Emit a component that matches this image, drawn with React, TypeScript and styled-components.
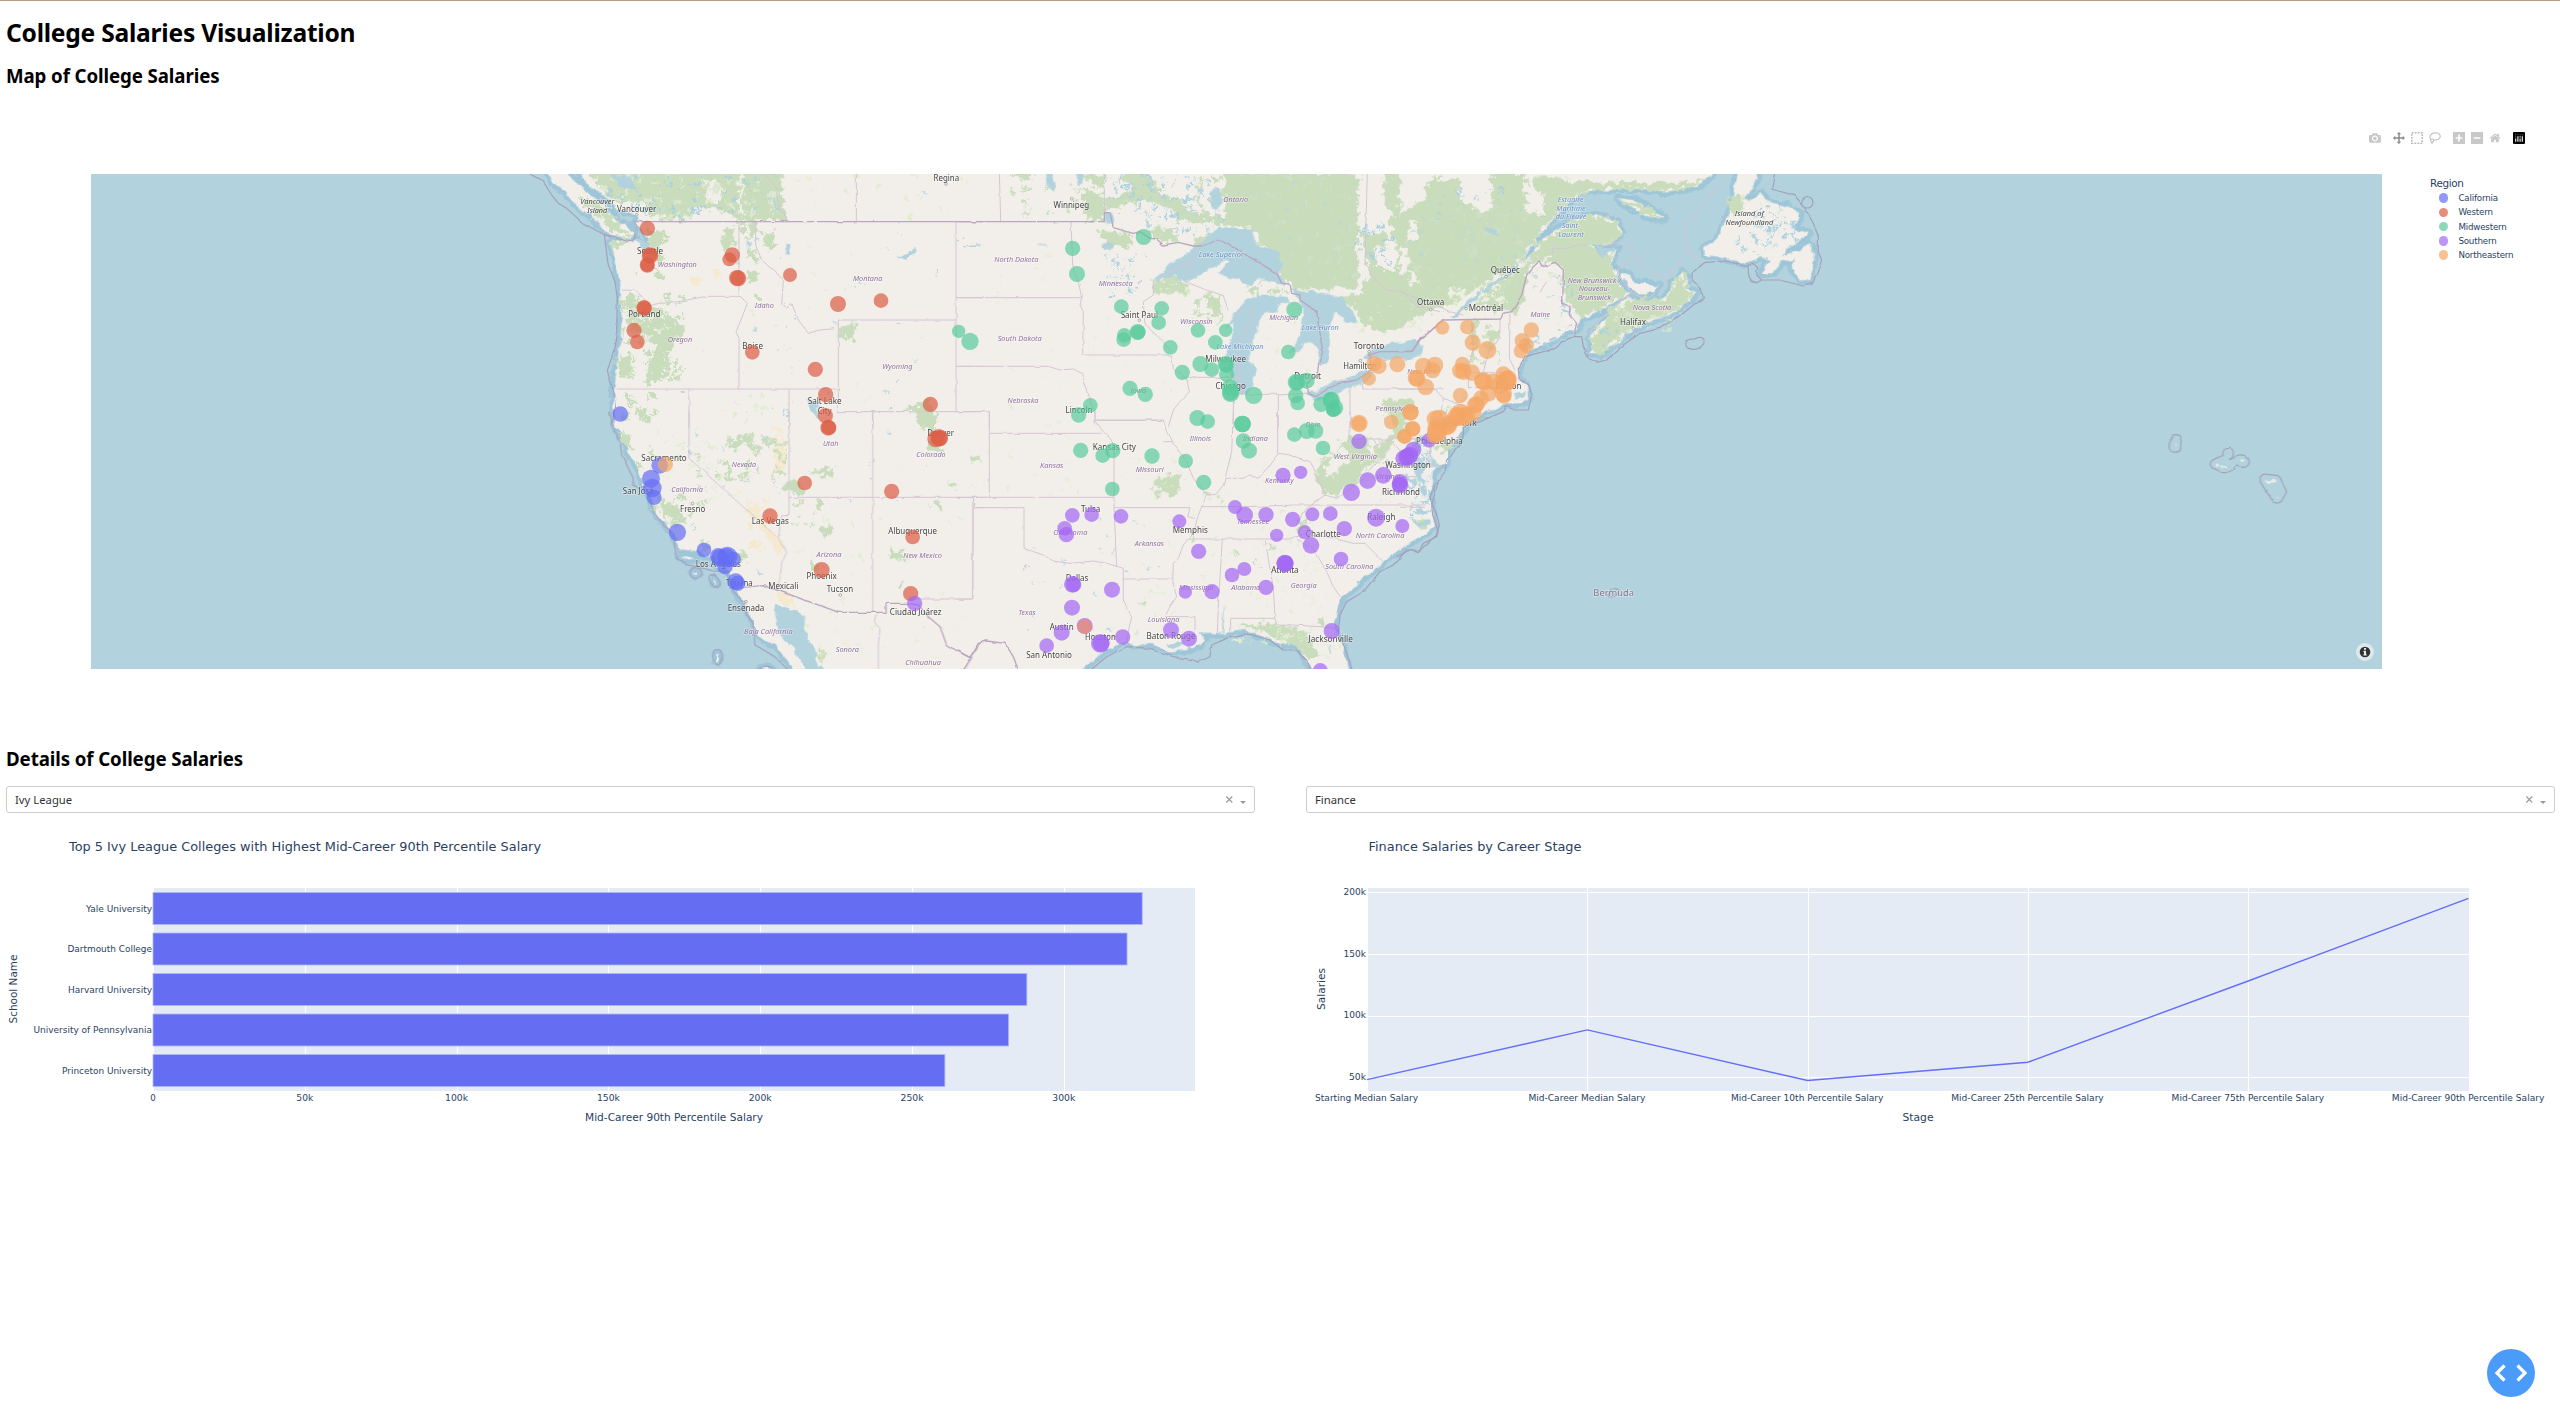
import React from "react";
import styled, { createGlobalStyle } from "styled-components";

const GlobalStyle = createGlobalStyle`
  * { box-sizing: border-box; }
  body { margin: 0; background: #fff; color: #000; font-family: "Noto Sans", "Open Sans", sans-serif; overflow: hidden; }
`;

const verdana = `"DejaVu Sans", Verdana, sans-serif`;

const Page = styled.main`
  display: flex;
  flex-direction: column;
  height: 1422px;
  border-top: 1px solid #b99f80;
  padding: 14px 5px 0 6px;
`;
const Title = styled.h1`
  margin: 0;
  height: 36px;
  font: 700 24.6px/36px "Noto Sans", sans-serif;
  letter-spacing: -0.24px;
`;
const Heading = styled.h2<{ $gap: number }>`
  margin: ${(p) => p.$gap}px 0 0;
  height: 30px;
  font: 700 18.7px/30px "Noto Sans", sans-serif;
  letter-spacing: -0.1px;
`;
const MapFigure = styled.section`
  display: flex;
  flex-direction: column;
  height: 636px;
  margin-top: 10px;
  padding: 31px 0 0 85px;
`;
const ModeBar = styled.div`
  display: flex;
  align-items: center;
  justify-content: flex-end;
  height: 12px;
  padding-right: 30px;
  margin-bottom: 30px;
`;
const ModeGroup = styled.div`
  display: flex;
  gap: 6px;
  margin-left: 12px;
`;
const ModeIcon = styled.svg<{ $active?: boolean }>`
  display: block;
  width: 12px;
  height: 12px;
  fill: ${(p) => (p.$active ? "#8a8a8a" : "#c8c8c8")};
`;
const MapRow = styled.div`
  display: flex;
  gap: 48px;
`;
const MapCanvas = styled.div`
  position: relative;
  width: 2291px;
  height: 495px;
  background: #b2d2dd;
`;
const MapSvg = styled.svg`
  display: block;
  width: 2291px;
  height: 495px;
`;
const Attribution = styled.button`
  position: absolute;
  right: 8px;
  bottom: 8px;
  width: 18px;
  height: 18px;
  padding: 0;
  border: 0;
  border-radius: 50%;
  background: #dce9ee;
`;
const Legend = styled.div`
  display: flex;
  flex-direction: column;
  padding-top: 2px;
  color: #2a3f5f;
  font-family: ${verdana};
`;
const LegendTitle = styled.div`
  height: 15px;
  font-size: 10.4px;
  line-height: 15px;
  letter-spacing: -0.35px;
`;
const LegendItem = styled.div`
  display: flex;
  align-items: center;
  gap: 10.5px;
  height: 14.25px;
  padding-left: 8.5px;
  font-size: 8.7px;
  letter-spacing: -0.18px;
`;
const Swatch = styled.span<{ $color: string }>`
  width: 9.4px;
  height: 9.4px;
  border-radius: 50%;
  opacity: 0.7;
  background: ${(p) => p.$color};
`;
const Columns = styled.div`
  display: grid;
  grid-template-columns: 1249px 1249px;
  column-gap: 51px;
  margin-top: 12px;
`;
const Column = styled.div`
  display: flex;
  flex-direction: column;
`;
const Select = styled.div`
  display: flex;
  align-items: center;
  height: 27px;
  padding: 0 7px 0 8px;
  border: 1px solid #ccc;
  border-radius: 3px;
  font: 11.3px/25px "Noto Sans", sans-serif;
  color: #333;
`;
const SelectValue = styled.span`
  flex: 1;
`;
const SelectIcons = styled.svg`
  width: 22px;
  height: 12px;
`;
const ChartSvg = styled.svg`
  display: block;
  width: 1249px;
  height: 330px;
  overflow: visible;
  font-family: ${verdana};
  fill: #2a3f5f;
`;
const DebugButton = styled.button`
  position: fixed;
  right: 25px;
  bottom: 25px;
  width: 48px;
  height: 48px;
  padding: 0;
  border: 0;
  border-radius: 50%;
  background: #4a9bfa;
`;

/* ---------- map data: each sheet has its own origin, three units to a pixel ---------- */

/* "T" is the western school in Texas, which lies over the southern ones. */
const COLORS = { C: "#646ef5", W: "#dd5d44", M: "#58cb9b", S: "#a266f4", N: "#f3a666", T: "#ee8f62" };
type Region = keyof typeof COLORS;
type Label = [string, number, number, number, "city" | "state" | "water" | "island" | "country"];
interface Sheet {
  x: number;
  y: number;
  land?: string;
  forest?: string;
  clear?: string;
  sand?: string;
  water?: string;
  border?: string;
  nation?: string;
  sea?: string;
  labels?: Label[];
  dots?: Partial<Record<Region, number[][]>>;
  patches?: [number, number, number, number, number, number, string][];
}

const G = "#c9ddbd";
const L = "#e1ecd0";
const B = "#abd0df";
const P = "#dde8d2";

const sheets: Sheet[] = [
  {
    x: 500, y: 165,
    land: "M145,10 L145,30 160,55 200,85 230,120 285,165 310,195 345,210 390,222 402,205 380,182 350,165 320,130 290,100 265,85 240,60 215,40 195,10Z M230,10 L260,55 300,85 330,100 350,135 385,140 410,158 405,172 430,200 445,215 450,260 440,270 425,238 405,228 350,226 330,235 345,270 352,330 362,375 365,450 362,520 350,600 345,660 340,720 345,790 1450,790 1450,10Z",
    forest: "M255,15 H845 V90 L865,165 720,168 690,150 640,150 600,130 575,150 540,165 480,160 450,150 430,115 390,110 350,115 300,60Z M225,95 L260,100 300,120 330,150 370,185 392,215 350,205 310,180 320,165 280,140Z M330,230 L390,222 365,240 345,255Z M440,190 L500,205 500,235 470,250 495,280 480,300 455,260Z M370,390 L410,395 450,425 500,440 555,495 540,530 500,560 515,600 470,650 440,655 450,590 465,540 430,510 400,490 385,470Z M345,590 L385,565 390,600 380,640 362,635Z M745,310 L778,325 765,355 745,345Z M790,205 H825 V240 L800,250Z M755,245 L778,280 770,300 750,275Z M1015,488 L1075,475 1060,525 1020,520Z M1215,735 L1290,700 1310,780 1260,790 1240,740Z M460,315 L495,330 480,350Z M765,400 L788,395 780,415Z M720,172 H735 V200 H722Z M745,172 H768 V215 H748Z M670,200 L705,180 700,240 670,260Z M400,320 L415,330 405,335Z",
    clear: "M620,45 L660,50 665,110 620,115Z M575,133 H668 V168 H575Z M718,27 H728 V150 H718Z",
    sand: "M575,335 L600,335 600,360 575,362Z M640,320 L658,315 655,340Z",
    water: "M335,30 L390,35 410,70 380,75 350,60Z M400,225 L425,225 450,240 440,260 420,240Z M920,700 L955,715 955,760 930,740Z M855,235 L868,240 866,268 857,262Z M740,225 L756,235 745,248Z M1190,275 L1230,260 1250,245 1250,258 1215,285Z M1260,80 L1280,85 1275,90Z M1392,240 L1440,238 1440,242 1392,244Z M545,675 h8 v8 h-8Z M762,485 h6 v15 h-6Z",
    border: "M717,170 V390 L742,415 725,460 708,500 717,520 V672 M350,672 H1015 M365,375 L400,376 430,400 450,422 480,415 520,412 560,405 620,394 H722 M767,170 V240 L785,285 830,325 850,345 845,420 860,430 875,415 895,465 925,505 960,495 1015,490 M1368,465 H1015 V740 H1450 M1368,170 V740 M1368,398 H1450 M1368,604 H1450 M567,672 V790 M867,672 V790 M1118,740 V790 M1069,20 V170 M790,20 L830,70 835,125 865,168",
    nation: "M402,170 H1450 M402,170 L412,185 405,205 410,215",
    sea: "M80,20 L130,50 155,90 175,115 200,130 250,175 310,208 380,228 400,225 410,212 M313,208 L318,250 325,300 345,350 352,400 350,500 340,560 322,620 335,660 347,700 340,760 332,780",
    labels: [["Vancouver", 292, 118, 102, "island"], ["Island", 292, 144, 60, "island"], ["Vancouver", 410, 140, 118, "city"], ["Seattle", 450, 266, 78, "city"], ["Washington", 532, 306, 117, "state"], ["Portland", 433, 455, 97, "city"], ["Oregon", 540, 531, 73, "state"], ["Idaho", 793, 430, 57, "state"], ["Montana", 1103, 348, 88, "state"], ["Boise", 758, 553, 62, "city"], ["Wyoming", 1192, 611, 91, "state"], ["Salt Lake", 974, 716, 102, "city"], ["City", 974, 746, 42, "city"], ["Regina", 1339, 49, 77, "city"]],
    dots: {
      C: [[361, 747, 23]],
      W: [[442, 190, 23], [450, 272, 25], [450, 270, 22], [442, 300, 23], [442, 300, 21], [697, 270, 23], [688, 283, 21], [711, 339, 24], [715, 340, 24], [870, 330, 21], [1014, 417, 24], [1143, 407, 22], [432, 428, 23], [433, 430, 22], [402, 496, 23], [412, 531, 22], [757, 562, 22], [946, 613, 23], [977, 689, 23], [1291, 718, 23], [976, 752, 23]],
      M: [[1376, 499, 20], [1410, 529, 26]],
    },
    patches: [[270, 30, 560, 130, 90, 7, P], [360, 390, 190, 260, 70, 9, G], [380, 400, 160, 230, 40, 6, "#ecefe2"], [330, 30, 500, 130, 60, 6, B], [365, 680, 100, 90, 16, 9, G], [670, 175, 160, 120, 24, 9, G], [880, 30, 540, 130, 16, 6, L], [380, 240, 900, 500, 60, 4, L], [750, 200, 640, 550, 30, 4, B], [700, 690, 120, 80, 10, 7, L]],
  },
  {
    x: 500, y: 415,
    land: "M345,-20 L355,40 375,90 390,120 410,150 425,190 430,215 450,235 458,260 465,290 500,335 525,355 530,390 540,403 590,408 640,430 655,455 680,462 700,490 705,515 720,550 740,580 760,620 775,660 800,680 830,690 840,710 870,745 885,775 1450,775 1450,-20Z M540,430 l20,-3 25,5 -20,5Z M575,470 l20,4 -5,8Z M640,490 l10,15 -8,0Z M650,715 l8,8 -4,22 -8,-8Z M780,760 l20,-5 18,10Z",
    forest: "M360,50 L385,60 395,110 375,90Z M405,130 L425,150 420,170Z M482,260 L510,265 560,305 555,330 510,300 485,285Z M440,90 L470,120 455,130Z M600,380 L625,385 620,405 595,395Z M700,410 L745,415 735,440 715,435Z M1260,-20 L1310,0 1305,60 1330,110 1285,100 1290,50 1265,20Z M845,215 L880,190 915,220 900,235 860,225Z M935,170 L995,155 1000,185 960,185Z M945,245 L970,260 965,290 950,280Z M960,340 L1000,345 985,358 960,355Z M1165,408 L1210,405 1205,425 1225,435 1170,430Z M1310,255 L1325,275 1318,290 1308,280Z M1200,495 L1215,510 1200,520Z M690,110 L700,80 720,60 730,90Z M930,440 L960,450 955,470 930,460Z M955,705 L978,710 965,745 940,725Z M1345,205 L1370,205 1355,225Z",
    sand: "M825,530 L880,545 885,565 865,580 830,560 820,545Z M740,260 L770,275 800,330 835,370 855,410 835,415 800,370 760,320 745,290Z M700,220 L725,230 720,245Z M800,495 L815,500 812,515Z M825,30 L845,40 860,100 850,170 825,180Z",
    clear: "M835,50 L845,60 845,100 835,90Z",
    water: "M828,570 L870,580 912,600 915,640 930,680 950,712 945,730 960,750 988,775 930,775 905,745 890,715 880,700 850,675 835,650 825,600Z M563,105 l8,0 0,20 -8,-4Z M770,462 L788,480 780,484Z M585,45 l8,15 -4,5Z",
    border: "M567,-10 V130 L835,370 860,412 845,445 840,490 830,525 M867,-10 V302 L845,302 835,370 M867,247 H1450 M1118,-10 V592 M1418,247 V552 H1225 M1420,250 V278 H1450 M1130,595 L1123,620 1140,640 1135,690 1135,775 M1395,765 L1420,725",
    nation: "M690,520 L790,512 830,525 1017,592 1158,592 V565 H1225 L1255,570 1285,605 1320,635 1340,690 1385,715 1410,728 1440,685",
    sea: "M330,-10 L335,20 345,50 360,80 365,120 385,160 400,190 398,210 415,218 435,215 450,250 460,290 490,330 520,355 525,400 530,430 560,450 590,455 640,468 675,470 690,500 700,530 730,560 740,600 760,625 765,690 800,710 830,730 865,765 M575,460 C560,490 590,500 605,480 C610,460 590,455 575,460 M630,480 C620,495 640,520 655,516 C670,505 650,478 630,480 M640,712 C635,725 640,745 655,747 C672,745 670,715 660,705 C650,702 642,704 640,712 M775,765 Q800,742 820,765",
    labels: [["Sacramento", 492, 138, 136, "city"], ["San José", 415, 236, 93, "city"], ["California", 561, 232, 95, "state"], ["Fresno", 578, 290, 76, "city"], ["Nevada", 732, 155, 73, "state"], ["Utah", 992, 93, 46, "state"], ["Denver", 1322, 63, 80, "city"], ["Colorado", 1293, 127, 88, "state"], ["Las Vegas", 811, 327, 111, "city"], ["Albuquerque", 1238, 358, 146, "city"], ["Los Angeles", 655, 457, 136, "city"], ["Tijuana", 718, 512, 80, "city"], ["Mexicali", 850, 523, 91, "city"], ["Ensenada", 738, 587, 110, "city"], ["Arizona", 987, 427, 75, "state"], ["Phoenix", 965, 491, 91, "city"], ["Tucson", 1020, 530, 79, "city"], ["New Mexico", 1268, 428, 116, "state"], ["Ciudad Juárez", 1247, 600, 155, "city"], ["Baja California", 805, 657, 146, "state"], ["Sonora", 1042, 710, 70, "state"], ["Chihuahua", 1269, 751, 107, "state"]],
    dots: {
      C: [[479, 151, 25], [453, 191, 27], [457, 219, 28], [462, 247, 23], [532, 352, 26], [612, 405, 22], [655, 424, 25], [682, 425, 30], [680, 425, 25], [660, 428, 26], [700, 433, 23], [675, 455, 23], [707, 500, 25], [713, 505, 23]],
      W: [[985, 38, 24], [986, 38, 22], [1307, 72, 25], [1317, 68, 26], [1320, 70, 24], [914, 204, 22], [810, 303, 23], [1175, 229, 23], [1238, 366, 22], [965, 465, 24], [1232, 536, 23]],
      S: [[1244, 565, 23]],
      N: [[496, 148, 23]],
    },
    patches: [[680, 60, 180, 140, 40, 9, G], [440, 40, 230, 200, 36, 6, L], [470, 240, 110, 90, 20, 9, G], [590, 120, 100, 150, 18, 6, G], [870, 170, 120, 190, 14, 7, G], [560, 20, 800, 330, 26, 4, B], [900, 250, 500, 400, 28, 5, L], [730, 240, 100, 170, 18, 10, "#f5e9cc"], [880, 600, 520, 140, 20, 4, L]],
  },
  {
    x: 960, y: 165,
    land: "M-10,10 H1460 V800 H-10Z",
    forest: "M150,20 H215 V50 L190,45Z M375,70 L433,95 V170 L385,165 365,130Z M360,30 L433,30 433,70 400,60Z M435,100 L490,90 520,60 490,50 495,20 570,20 570,55 600,60 600,90 645,95 670,120 670,130 720,150 793,155 793,20 1195,20 1195,370 1120,370 1010,378 980,350 965,340 960,290 950,255 910,250 885,210 875,190 820,185 780,180 760,170 645,170 640,130 600,120 560,110 500,115 435,140Z M420,195 L500,205 520,230 510,245 450,245 415,215Z M568,195 L630,190 655,215 640,235 580,220Z M705,215 L760,200 735,245 700,240Z M578,350 L640,330 690,360 685,388 580,388Z M1205,210 L1285,205 1290,235 1245,250 1245,300 1290,320 1345,325 1345,355 1370,355 1370,210 1345,170 1345,230 1295,220 1295,140 1270,130 1270,20 1320,20 1325,90 1345,130 1370,130 1370,100 1395,90 1395,50 1440,30 1440,400 1400,440 1330,480 1260,500 1210,480 1180,430 1130,395 1200,385 1210,370 1225,330 1218,290Z M735,390 L780,395 790,450 765,450 745,420Z M870,370 L885,360 895,385 880,385Z M920,370 L965,372 960,380 925,382Z M1265,710 L1340,700 1330,780 1290,780Z",
    clear: "M1245,250 H1290 V235 L1345,235 1345,320 1290,320 1245,300Z",
    water: "M580,345 L640,290 700,250 740,220 775,185 830,188 875,190 890,235 910,250 950,250 965,300 960,330 975,358 940,350 900,342 880,357 850,355 830,342 790,335 772,320 808,290 790,288 740,322 700,342 660,352 640,330 600,343Z M800,490 L830,435 850,410 870,402 895,390 940,390 975,395 990,410 960,418 945,440 920,440 900,460 895,490 880,530 870,570 885,620 880,660 860,690 835,692 815,660 805,600 800,560 815,520 822,470Z M990,375 L1050,378 1100,385 1150,400 1175,440 1195,475 1160,470 1120,440 1110,480 1110,530 1105,590 1085,605 1070,590 1080,560 1060,530 1030,535 1010,560 985,570 1010,540 1025,490 1030,440 1020,410Z M1030,680 L1070,680 1120,650 1170,635 1215,615 1240,620 1220,650 1160,670 1110,700 1065,707Z M1205,585 L1240,550 1290,537 1360,530 1390,540 1385,570 1340,585 1260,580Z M745,80 L780,70 790,110 770,140 750,125Z M255,30 L275,20 290,60 280,78 262,70Z M345,20 H370 V55 L350,60Z M433,140 L455,145 465,175 440,175Z M430,235 L460,232 455,252 432,248Z M230,235 L270,245 240,243Z M505,368 l12,0 -2,15 -10,-4Z M470,290 l10,0 0,12 -10,0Z",
    border: "M118,20 L122,168 M433,20 V143 M333,170 L338,300 355,350 365,398 360,420 370,440 368,570 M-10,398 H365 M-10,604 H265 L300,615 340,612 365,625 370,650 390,700 405,740 V780 M363,570 H635 L640,610 680,640 688,680 660,710 640,735 625,785 M405,766 H610 M580,345 V390 L550,410 555,480 600,520 635,560 M665,637 H843 M665,298 H695 L675,350 740,375 790,392 805,440 M600,340 L665,298 M695,298 L715,245 M815,460 L840,435 880,445 845,520 835,580 843,690 820,690 V790 M843,688 H955 V790 M955,690 L1035,685 M-10,740 H88 V790 M1170,670 V790 M1208,640 V672 H1450 M1222,20 L1215,290 1250,350 1280,375 1330,380 1370,425 1440,440",
    nation: "M-10,170 H433 V143 H450 L460,188 520,205 540,200 570,220 590,222 610,240 655,232 700,243 735,243 775,222 850,265 950,325 965,355 990,357 995,385 1020,390 1020,405 1070,440 1088,560 1075,600 1072,630 1040,655 1042,685 1065,695 1130,657 1190,645 1240,612 1225,570 1260,560 H1355 L1380,522 1410,500 1450,462",
    labels: [["Winnipeg", 334, 128, 107, "city"], ["Ontario", 827, 112, 74, "state"], ["North Dakota", 169, 291, 132, "state"], ["Lake Superior", 784, 275, 135, "water"], ["Minnesota", 467, 363, 102, "state"], ["Saint Paul", 538, 459, 112, "city"], ["Wisconsin", 709, 476, 98, "state"], ["Michigan", 971, 466, 87, "state"], ["Lake Huron", 1081, 496, 111, "water"], ["South Dakota", 179, 528, 132, "state"], ["Lake Michigan", 840, 551, 141, "water"], ["Toronto", 1227, 551, 91, "city"], ["Milwaukee", 797, 592, 122, "city"], ["Hamilton", 1200, 612, 101, "city"], ["Detroit", 1043, 641, 80, "city"], ["Chicago", 812, 672, 91, "city"], ["Iowa", 535, 683, 47, "state"], ["Nebraska", 189, 713, 93, "state"], ["Lincoln", 357, 743, 81, "city"], ["Pennsylvania", 1310, 739, 128, "state"]],
    dots: {
      M: [[338, 250, 23], [351, 327, 24], [551, 216, 24], [484, 425, 22], [605, 430, 22], [596, 473, 22], [533, 501, 24], [534, 502, 22], [493, 511, 22], [491, 524, 22], [631, 547, 22], [714, 496, 22], [797, 496, 20], [766, 532, 22], [721, 597, 24], [755, 614, 22], [797, 597, 24], [799, 602, 22], [800, 628, 23], [667, 622, 23], [810, 668, 25], [812, 685, 26], [811, 683, 24], [881, 691, 26], [510, 670, 23], [556, 688, 23], [391, 721, 22], [356, 750, 23], [712, 759, 24], [743, 770, 22], [848, 777, 25], [1003, 434, 24], [985, 561, 22], [1008, 652, 25], [1012, 652, 24], [1040, 647, 24], [1007, 692, 23], [1013, 714, 22], [1083, 718, 23], [1114, 706, 26], [1112, 704, 23], [1125, 728, 25], [1120, 733, 23]],
      N: [[1242, 596, 23], [1256, 603, 24], [1312, 598, 24], [1227, 641, 21]],
    },
    patches: [[800, 40, 390, 310, 60, 7, "#cfe0c5"], [440, 30, 330, 130, 80, 6, B], [560, 130, 230, 70, 30, 5, B], [640, 30, 150, 130, 14, 12, G], [800, 40, 380, 320, 40, 4, "#bcd8d2"], [1190, 180, 250, 120, 36, 7, B], [1320, 40, 70, 120, 14, 5, B], [440, 260, 120, 130, 26, 5, B], [150, 60, 260, 100, 20, 7, G], [100, 260, 600, 480, 45, 4, L], [850, 360, 130, 30, 10, 6, G], [690, 390, 100, 80, 18, 7, G], [900, 450, 180, 250, 20, 4, L], [1180, 400, 240, 110, 30, 5, L], [580, 340, 110, 50, 14, 5, L]],
  },
  {
    x: 960, y: 415,
    land: "M-10,-20 H1460 V150 L1405,150 1420,200 1408,240 1420,300 1425,335 1390,360 1330,395 1270,440 1200,500 1145,550 1128,600 1120,640 1135,670 1155,720 1170,775 1060,775 1040,735 1015,695 990,685 960,692 920,668 850,645 810,652 770,655 715,652 735,675 720,692 680,705 620,710 590,690 540,690 490,682 440,705 400,735 350,775 -10,775Z",
    forest: "M1065,170 L1100,130 1150,85 1165,70 1230,60 1225,110 1200,150 1230,130 1290,60 1330,10 1345,30 1310,70 1270,120 1220,160 1190,200 1130,240 1095,235 1075,205Z M575,200 L620,180 660,185 655,235 615,230 590,215Z M835,630 L940,625 1040,650 1060,690 1080,720 1050,730 1020,700 985,680 930,665 900,645 850,640Z M815,410 L835,405 830,425Z M780,245 L795,250 790,290Z M925,380 L940,395 930,410Z M1075,610 h18 v14 h-18Z M30,120 H60 V145 H35Z M1015,330 L1045,310 1040,345 1010,350Z M880,445 L895,440 890,460Z M730,230 h20 v15 h-20Z M690,365 l20,-10 -5,20Z M535,555 l20,5 -10,15Z",
    clear: "M1115,120 L1160,90 1170,130 1120,190 1095,180Z",
    water: "M1370,60 L1385,90 1375,120 1400,160 1385,180 1400,220 1380,200 1360,160 1372,130 1360,90Z M1372,330 l40,-20 0,12 -35,18Z M1370,285 l35,0 0,10 -30,4Z M790,570 l4,80 -8,0Z M620,690 l30,-8 20,10 -30,8Z M1050,650 l6,20 -6,2Z M1110,690 l5,25 -6,0Z",
    border: "M-10,247 H462 M88,-10 V247 M88,55 H425 M405,-10 V15 L430,50 450,70 462,90 V278 H690 L683,305 705,310 M405,15 H610 L620,50 635,80 680,140 700,190 740,240 768,238 790,210 795,190 850,190 870,180 895,190 925,155 955,115 990,120 1050,140 1065,165 M820,-10 L815,110 795,190 M953,-10 V115 M40,247 V278 H192 V400 L250,420 280,438 330,445 400,438 440,445 490,460 V492 H635 M462,278 L470,455 M490,490 V555 L515,605 505,650 500,690 M40,278 L38,552 H-10 M740,240 L715,300 700,355 670,390 655,430 640,445 638,500 650,545 630,575 615,605 H705 V645 M725,275 H850 L1010,270 H1398 M680,372 H985 L1040,355 M787,372 L775,570 772,655 M915,372 L940,520 945,610 950,627 1080,635 1120,640 M812,650 V610 H945 M1010,372 L1060,400 1100,470 1120,515 1140,545 M1040,360 L1100,365 1180,385 1215,385 1270,440 M1095,240 L1040,280 1010,325 M1065,165 L1095,240 1130,250 1200,200 1290,100 M1170,-10 V72 H1400 M1240,72 L1250,90 1290,75 1330,120 M610,80 L635,80",
    nation: "M-10,705 L30,728 55,685 80,678 135,685 160,725 175,765 M35,726 L10,765",
    sea: "M380,775 L440,725 500,695 570,700 640,725 700,735 715,742 750,725 755,690 800,670 870,658 930,675 970,705 1010,705 1045,745 1055,775 M1180,775 L1155,700 1135,650 1140,600 1160,560 1210,530 1260,470 1300,450 1340,405 1380,405 1430,360 1432,340 1418,300 1415,270 1435,200 M1440,160 L1450,150",
    labels: [["Kansas City", 463, 105, 130, "city"], ["Kansas", 275, 159, 70, "state"], ["Missouri", 569, 170, 84, "state"], ["Illinois", 721, 77, 64, "state"], ["Indiana", 886, 77, 76, "state"], ["Ohio", 1059, 37, 46, "state"], ["West Virginia", 1186, 132, 130, "state"], ["Washington", 1344, 158, 137, "city"], ["Kentucky", 958, 203, 86, "state"], ["Virginia", 1285, 191, 74, "state"], ["Richmond", 1323, 240, 114, "city"], ["Tulsa", 392, 290, 58, "city"], ["Oklahoma", 331, 360, 102, "state"], ["Tennessee", 879, 328, 96, "state"], ["Memphis", 691, 354, 105, "city"], ["Raleigh", 1264, 314, 84, "city"], ["Charlotte", 1090, 366, 105, "city"], ["North Carolina", 1260, 369, 146, "state"], ["Arkansas", 568, 393, 88, "state"], ["Atlanta", 975, 473, 82, "city"], ["South Carolina", 1168, 463, 144, "state"], ["Dallas", 351, 497, 68, "city"], ["Mississippi", 709, 525, 104, "state"], ["Alabama", 857, 524, 87, "state"], ["Georgia", 1031, 518, 78, "state"], ["Texas", 201, 600, 51, "state"], ["Louisiana", 611, 621, 95, "state"], ["Austin", 305, 644, 72, "city"], ["Houston", 421, 674, 92, "city"], ["Baton Rouge", 633, 671, 147, "city"], ["San Antonio", 267, 729, 137, "city"], ["Jacksonville", 1112, 681, 133, "city"]],
    dots: {
      M: [[847, 27, 25], [850, 78, 23], [867, 107, 24], [1003, 59, 22], [1040, 48, 24], [1067, 48, 23], [1089, 99, 22], [362, 106, 23], [428, 122, 22], [458, 107, 23], [576, 123, 23], [677, 138, 22], [731, 202, 23], [457, 222, 22], [1120, -16, 22]],
      S: [[1197, 79, 23], [1360, 104, 24], [1407, 76, 22], [1345, 125, 27], [1340, 126, 25], [1350, 120, 25], [1330, 130, 24], [1270, 181, 25], [1223, 197, 25], [1174, 232, 26], [1320, 200, 23], [1320, 210, 25], [1319, 209, 23], [969, 181, 23], [1022, 172, 20], [825, 276, 21], [854, 300, 25], [918, 299, 23], [998, 313, 23], [1057, 298, 21], [1111, 296, 22], [1248, 308, 27], [1327, 333, 21], [1153, 341, 23], [1034, 352, 21], [950, 361, 20], [1053, 391, 25], [658, 319, 21], [716, 409, 23], [483, 304, 22], [337, 301, 22], [395, 299, 22], [314, 340, 22], [319, 359, 23], [337, 508, 25], [341, 509, 23], [456, 524, 24], [336, 578, 24], [374, 633, 24], [305, 653, 24], [260, 692, 22], [421, 685, 28], [423, 685, 25], [488, 666, 23], [633, 645, 24], [687, 671, 24], [676, 531, 20], [756, 530, 23], [816, 480, 22], [853, 462, 21], [918, 517, 23], [975, 445, 26], [975, 445, 25], [976, 446, 24], [1143, 432, 22], [1115, 648, 24], [1081, 766, 22]],
      T: [[374, 635, 22]],
      N: [[1197, 25, 26], [1197, 26, 22], [1294, 21, 22], [1358, 42, 23], [1333, 65, 22], [1352, -8, 24]],
    },
    patches: [[570, 180, 90, 60, 18, 8, G], [20, 20, 400, 220, 20, 5, L], [480, 130, 450, 120, 30, 4, L], [190, 300, 440, 380, 34, 4, B], [540, 290, 500, 340, 50, 5, L], [1080, 70, 220, 150, 40, 6, G], [1150, 250, 240, 110, 18, 4, L], [820, 630, 240, 60, 30, 6, L], [950, 400, 180, 200, 20, 4, L], [1360, 60, 50, 170, 20, 6, B], [1060, 650, 80, 100, 14, 6, L]],
  },
  {
    x: 1400, y: 165,
    land: "M-10,10 L945,10 935,35 880,68 800,80 720,70 650,72 570,76 530,92 490,130 440,185 410,220 380,265 345,305 400,260 440,215 470,195 520,163 590,150 650,168 667,200 650,220 620,238 570,238 600,270 650,250 630,300 655,330 655,360 690,388 640,410 600,440 545,462 530,490 505,500 470,520 430,542 385,560 365,590 355,640 380,660 385,700 370,715 320,715 230,755 190,790 170,830 130,862 128,890 100,920 75,950 90,1010 90,1070 60,1110 20,1140 -10,1160Z M632,430 L680,400 760,412 800,395 820,350 850,318 862,340 855,370 890,385 830,440 750,470 690,500 640,540 600,570 575,560 570,510 610,470 650,445Z M1015,10 L1075,10 1065,50 1035,100 1050,105 1085,85 1100,110 1150,120 1200,145 1195,170 1165,185 1228,205 1195,235 1165,245 1150,270 1185,260 1200,255 1225,235 1245,270 1228,345 1205,345 1175,310 1185,280 1145,290 1120,325 1085,325 1110,285 1080,280 1030,295 950,275 915,270 912,250 940,232 970,190 1000,110Z M655,100 L700,105 750,130 795,160 740,158 690,125Z M660,325 L680,325 700,350 775,360 760,385 710,385 680,360Z",
    forest: "M75,55 L180,40 180,105 240,135 275,130 275,20 378,20 378,140 425,150 430,110 400,60 400,30 500,40 640,50 880,50 935,30 880,65 800,78 650,70 570,74 490,125 430,190 350,300 230,370 160,420 80,440 50,400 -10,380 -10,150 50,120 50,350 20,355 20,160 75,110Z M440,220 L520,165 590,152 650,168 665,205 620,238 570,238 600,270 645,255 630,300 655,360 685,390 640,410 590,435 535,455 510,420 492,405 490,315 465,292 430,300 450,270 390,300 370,380 340,430 300,440 225,420 260,360 350,320Z M635,430 L700,402 800,400 820,350 858,322 858,370 885,385 830,435 750,462 690,495 640,535 600,565 575,550 575,510 610,475Z M985,95 L1030,95 1028,135 1005,155 985,130Z M655,100 L700,107 750,130 790,158 740,152 690,125Z M215,470 L235,475 225,580 205,590 215,540Z M260,500 L300,490 300,515 275,540 265,575Z M330,440 L355,380 375,400 345,450Z M130,740 L190,710 200,690 170,720 130,750Z M100,850 L170,820 140,860Z M40,1060 L90,1075 70,1095 45,1085Z M0,700 L45,710 40,740 0,740Z",
    clear: "M178,25 H275 V130 L245,138 180,105Z M378,25 H400 V70 L428,85 V145 L378,140Z M502,25 H628 V52 H502Z M655,25 H855 V52 H655Z M25,170 H50 V230 H25Z M0,250 H25 V320 H50 V355 H25 V320 H0Z M0,30 H100 V55 H75 V110 L25,130 0,150Z",
    water: "M60,930 L40,900 55,960 75,990 60,960Z M85,840 L100,880 125,905 100,905Z M245,180 L290,195 300,215 270,205Z M240,378 L350,300 355,310 250,385Z M150,455 L235,380 245,388 160,462Z M10,925 L50,945 45,965Z M-5,535 L55,525 60,540 30,580 -5,585Z M345,685 l30,-8 -5,20 -20,5Z M575,235 L620,250 655,250 610,275Z",
    border: "M457,270 V250 H500 L540,240 560,240 M510,440 V428 M300,465 V520 L270,550 250,620 M330,445 L328,580 345,615 M215,465 L220,550 205,610 205,670 M205,622 H335 M205,668 H320 M-10,672 H105 L130,700 185,720 195,740 M130,700 L120,760 100,790 M-10,820 H70 M90,820 V905 H125 M0,935 H50 M0,1027 H75 M420,380 L440,350 M190,450 L150,440 130,430 0,380 M985,27 L857,185 860,262 807,330 765,330 735,305 710,275 690,245 660,230 600,245 M710,275 L660,305 655,330 695,385 740,403 790,370 807,330 M860,262 L915,292 M690,385 L650,420 600,465 555,515",
    nation: "M-10,560 L38,558 60,525 130,465 302,462 310,445 335,440 345,425 365,390 380,330 400,305 420,287 430,305 465,292 490,315 488,415 510,425 508,450 530,475 520,515",
    sea: "M520,515 L545,515 550,545 565,580 590,592 620,585 670,540 720,505 780,490 850,445 880,420 910,400 905,375 878,350 880,320 915,292 980,288 1040,305 1055,293 1072,305 1070,330 1085,345 1140,345 1210,363 1240,355 1265,285 1255,260 1255,215 1240,175 1215,130 1185,92 1115,72 1125,20 M1045,305 Q1042,350 1070,353 L1085,345 M520,515 L485,530 470,548 430,560 375,575 355,610 358,645 385,660 395,690 385,735 345,735 320,725 310,740 240,770 190,785 190,810 180,840 140,885 135,920 105,960 90,1000 110,1050 118,1080 110,1115 70,1135 55,1160 35,1153 -10,1175 M1205,112 a17,17 0 1 0 34,0 a17,17 0 1 0 -34,0 M870,522 C850,530 855,550 875,553 C895,555 905,545 912,535 C915,515 900,515 888,520 C882,525 876,522 870,522 M624,1294 C626,1278 640,1266 656,1273 C658,1290 640,1300 624,1294",
    labels: [["Estuaire", 512, 111, 78, "water"], ["Maritime", 513, 137, 88, "water"], ["du Fleuve", 513, 163, 92, "water"], ["Saint-", 513, 190, 56, "water"], ["Laurent", 513, 216, 77, "water"], ["Québec", 316, 325, 87, "city"], ["Ottawa", 92, 421, 82, "city"], ["Montréal", 258, 438, 103, "city"], ["Maine", 421, 455, 59, "state"], ["New Brunswick /", 583, 353, 160, "state"], ["Nouveau-", 583, 379, 94, "state"], ["Brunswick", 583, 405, 100, "state"], ["Nova Scotia", 756, 435, 116, "state"], ["Halifax", 699, 480, 78, "city"], ["Island of", 1048, 153, 87, "island"], ["Newfoundland", 1048, 180, 143, "island"], ["New York", 66, 627, 88, "state"], ["Boston", 325, 673, 78, "city"], ["New York", 180, 784, 100, "city"], ["Philadelphia", 118, 836, 140, "city"], ["Bermuda", 641, 1293, 122, "country"]],
    dots: {
      N: [[127, 488, 21], [202, 486, 22], [218, 533, 24], [262, 555, 27], [394, 495, 23], [367, 527, 23], [379, 541, 23], [363, 558, 22], [70, 603, 25], [105, 600, 25], [98, 616, 24], [187, 597, 22], [180, 617, 24], [190, 620, 25], [215, 623, 25], [48, 639, 25], [52, 641, 25], [77, 666, 25], [181, 691, 23], [310, 628, 24], [247, 648, 25], [251, 649, 27], [280, 650, 25], [320, 648, 30], [319, 647, 28], [325, 640, 25], [300, 660, 27], [310, 685, 26], [312, 695, 22], [265, 685, 25], [243, 700, 24], [226, 720, 25], [231, 717, 24], [222, 745, 23], [200, 750, 26], [182, 746, 30], [175, 755, 28], [170, 753, 27], [192, 757, 27], [150, 775, 25], [140, 783, 26], [145, 785, 24], [118, 763, 29], [106, 762, 26], [110, 790, 28], [112, 800, 30], [110, 803, 28], [105, 812, 25], [38, 791, 23], [14, 814, 22], [31, 742, 25]],
    },
    patches: [[20, 130, 400, 260, 70, 7, "#cfe0c5"], [30, 150, 370, 180, 50, 5, "#bdd9cf"], [100, 60, 330, 100, 20, 5, B], [430, 330, 80, 160, 16, 5, B], [1050, 110, 150, 140, 40, 6, B], [1010, 170, 120, 90, 16, 5, B], [370, 520, 140, 30, 16, 7, B], [150, 360, 170, 100, 40, 9, "#edf0e0"], [210, 460, 90, 130, 16, 6, G], [450, 320, 170, 90, 16, 5, "#d4e3c4"], [620, 420, 230, 80, 36, 6, "#dbe7cf"], [20, 960, 70, 130, 14, 6, B], [600, 480, 70, 70, 12, 4, B]],
  },
  {
    x: 2130, y: 420,
    land: "M256,130 l8,2 -2,6 -6,-2Z M268,136 l22,4 2,5 -18,-2Z M327,119 h14 l4,6 -12,4Z M404,178 l12,3 18,-1 4,5 -20,4Z M133,73 l5,4 -4,5Z M437,232 l8,3 -2,4Z",
    sea: "M133,46 C145,40 154,50 153,65 L152,88 C145,100 122,100 118,85 C115,70 122,60 133,46 M280,106 C272,86 300,78 309,93 C312,103 308,112 302,118 C310,120 312,110 322,107 C340,100 360,112 358,128 C352,145 335,145 318,138 C305,158 285,160 270,156 C250,150 235,140 242,126 C250,115 268,112 280,106 M400,162 L440,166 450,172 470,215 455,243 Q440,255 428,244 L392,188 Q386,170 400,162",
  },
];

/* Small seeded generator so that the speckles of forest and ponds stay put. */
const rng = (seed: number) => () => {
  seed = (seed * 1664525 + 1013904223) % 4294967296;
  return seed / 4294967296;
};

function Speckles({ sheet, seed }: { sheet: Sheet; seed: number }) {
  const r = rng(seed + 17);
  return (
    <>
      {(sheet.patches ?? []).flatMap(([x, y, w, h, n, size, fill], k) =>
        Array.from({ length: n }, (_, i) => (
          <ellipse key={`${k}-${i}`} cx={x + r() * w} cy={y + r() * h} rx={size * (0.4 + r() * 0.9)} ry={size * (0.3 + r())} fill={fill} />
        )),
      )}
    </>
  );
}

const labelStyle = {
  city: { fill: "#444", size: 24, italic: false },
  state: { fill: "#8f6f9d", size: 22, italic: true },
  water: { fill: "#6c8fc4", size: 22, italic: true },
  island: { fill: "#444", size: 22, italic: true },
  country: { fill: "#85708f", size: 26, italic: false },
};

function Layer({ children, filter }: { children: (s: Sheet, i: number) => React.ReactNode; filter?: string }) {
  return (
    <g filter={filter}>
      {sheets.map((s, i) => (
        <g key={i} transform={`translate(${(s.x - 500) * 3} ${(s.y - 165) * 3})`}>
          {children(s, i)}
        </g>
      ))}
    </g>
  );
}

const order: Region[] = ["C", "W", "M", "S", "N", "T"];

function CollegeMap() {
  return (
    <MapSvg viewBox="-1227 27 6873 1485">
      <defs>
        <filter id="coast" filterUnits="userSpaceOnUse" x="-300" y="0" width="5900" height="1540" colorInterpolationFilters="sRGB">
          <feTurbulence type="fractalNoise" baseFrequency="0.035" numOctaves="3" seed="4" />
          <feDisplacementMap in="SourceGraphic" scale="20" xChannelSelector="R" yChannelSelector="G" />
        </filter>
        <filter id="woods" filterUnits="userSpaceOnUse" x="-300" y="0" width="5900" height="1540" colorInterpolationFilters="sRGB">
          <feTurbulence type="fractalNoise" baseFrequency="0.05" numOctaves="4" seed="9" />
          <feDisplacementMap in="SourceGraphic" scale="42" xChannelSelector="R" yChannelSelector="G" />
        </filter>
        <filter id="wander" filterUnits="userSpaceOnUse" x="-300" y="0" width="5900" height="1540" colorInterpolationFilters="sRGB">
          <feTurbulence type="fractalNoise" baseFrequency="0.03" numOctaves="2" seed="2" />
          <feDisplacementMap in="SourceGraphic" scale="8" xChannelSelector="R" yChannelSelector="G" />
        </filter>
      </defs>
      <Layer filter="url(#coast)">{(s) => (s.x < 2000 ? <path d={s.land} fill="none" stroke="#9fc6d8" strokeWidth={26} strokeLinejoin="round" /> : null)}</Layer>
      <Layer filter="url(#coast)">{(s) => <path d={s.land} fill="#f2efea" />}</Layer>
      <Layer filter="url(#woods)">
        {(s, i) => (
          <>
            <path d={s.sand} fill="#f5e9cf" />
            <path d={s.forest} fill={G} />
            <path d={s.clear} fill="#f2efea" />
            <Speckles sheet={s} seed={i * 101} />
          </>
        )}
      </Layer>
      <Layer filter="url(#coast)">{(s) => <path d={s.water} fill="#b2d2dd" />}</Layer>
      <Layer filter="url(#wander)">
        {(s) => (
          <g fill="none" strokeLinejoin="round">
            <path d={s.border} stroke="#d4c6d4" strokeWidth={3} />
            <path d={s.nation} stroke="#bba6c0" strokeWidth={4} />
            <path d={s.sea} stroke="#a3a1bd" strokeWidth={3.6} />
          </g>
        )}
      </Layer>
      <g fill="#f2efea" stroke="#777" strokeWidth={1.5}>
        {[[410, 149], [578, 1015], [795, 1263], [738, 1310], [1021, 1290], [1338, 57], [1715, 101], [1918, 466], [2607, 560], [2581, 587], [3018, 335], [2898, 431], [3400, 490], [2792, 434]].map(([x, y]) => (
          <circle key={`${x}-${y}`} cx={x} cy={y} r={4} />
        ))}
      </g>
      <Layer>
        {(s) =>
          (s.labels ?? []).map(([text, x, y, w, kind]) => (
            <text
              key={`${text}-${y}`}
              x={x - w / 2}
              y={y}
              textLength={w}
              lengthAdjust="spacingAndGlyphs"
              fontFamily='"Noto Sans", sans-serif'
              fontSize={labelStyle[kind].size}
              fontStyle={labelStyle[kind].italic ? "italic" : "normal"}
              fill={labelStyle[kind].fill}
              stroke="#ffffff"
              strokeOpacity={0.45}
              strokeWidth={4}
              paintOrder="stroke"
            >
              {text}
            </text>
          ))
        }
      </Layer>
      {order.map((region) => (
        <Layer key={region}>
          {(s) => (s.dots?.[region] ?? []).map(([x, y, r], i) => <circle key={i} cx={x} cy={y} r={r} fill={COLORS[region]} fillOpacity={0.7} />)}
        </Layer>
      ))}
    </MapSvg>
  );
}

function ModeButtons() {
  const flip = "matrix(1 0 0 -1 0 850)";
  return (
    <ModeBar>
      <ModeGroup>
        <ModeIcon viewBox="0 0 1000 1000">
          <path transform={flip} d="m500 450c-83 0-150-67-150-150 0-83 67-150 150-150 83 0 150 67 150 150 0 83-67 150-150 150z m400 150h-120c-16 0-34 13-39 29l-31 93c-6 15-23 28-40 28h-340c-16 0-34-13-39-28l-31-94c-6-15-23-28-40-28h-120c-55 0-100-45-100-100v-450c0-55 45-100 100-100h800c55 0 100 45 100 100v450c0 55-45 100-100 100z m-400-550c-138 0-250 112-250 250 0 138 112 250 250 250 138 0 250-112 250-250 0-138-112-250-250-250z m365 380c-19 0-35 16-35 35 0 19 16 35 35 35 19 0 35-16 35-35 0-19-16-35-35-35z" />
        </ModeIcon>
      </ModeGroup>
      <ModeGroup>
        <ModeIcon $active viewBox="0 0 1000 1000">
          <path transform={flip} d="m1000 350l-187 188 0-125-250 0 0 250 125 0-188 187-187-187 125 0 0-250-250 0 0 125-188-188 186-187 0 125 252 0 0-250-125 0 187-188 188 188-125 0 0 250 250 0 0-126 187 188z" />
        </ModeIcon>
        <ModeIcon viewBox="0 0 12 12">
          <rect x="0.75" y="0.75" width="10.5" height="10.5" fill="none" stroke="#b8b8b8" strokeWidth="1.5" strokeDasharray="1.8 1.2" />
        </ModeIcon>
        <ModeIcon viewBox="0 0 12 12">
          <path d="M2.2 8.2C-0.4 5.6 1.2 1 6.4 0.8C11.6 0.8 12.6 5.4 9.2 7.3C7 8.4 5.2 8 4 7.4M4.6 8.6A1.5 1.5 0 1 1 2 7.6A1.5 1.5 0 0 1 4.6 8.6M3.6 9.6Q3.8 11 2.4 11.6" fill="none" stroke="#c0c0c0" strokeWidth="1.1" />
        </ModeIcon>
      </ModeGroup>
      <ModeGroup>
        <ModeIcon viewBox="0 0 875 875">
          <path transform="matrix(1 0 0 -1 0 787)" d="m1 787l0-875 875 0 0 875-875 0z m687-500l-187 0 0-187-125 0 0 187-188 0 0 125 188 0 0 187 125 0 0-187 187 0 0-125z" />
        </ModeIcon>
        <ModeIcon viewBox="0 0 875 875">
          <path transform="matrix(1 0 0 -1 0 787)" d="m0 788l0-876 876 0 0 876-876 0z m688-500l-500 0 0 125 500 0 0-125z" />
        </ModeIcon>
        <ModeIcon viewBox="0 0 928 1000">
          <path transform={flip} d="m786 296v-267q0-15-11-26t-25-10h-214v214h-143v-214h-214q-15 0-25 10t-11 26v267q0 1 0 2t0 2l321 264 321-264q1-1 1-4z m124 39l-34-41q-5-5-12-6h-2q-7 0-12 3l-386 322-386-322q-7-4-13-4-7 2-12 7l-35 41q-4 5-3 13t6 12l401 334q18 15 42 15t43-15l136-114v109q0 8 5 13t13 5h107q8 0 13-5t5-13v-227l122-102q5-5 6-12t-4-13z" />
        </ModeIcon>
      </ModeGroup>
      <ModeGroup>
        <ModeIcon viewBox="0 0 132 132">
          <rect width="132" height="132" rx="12" fill="#000" />
          <circle cx="30" cy="30" r="6" fill="#5b8fd8" />
          <circle cx="54" cy="30" r="6" fill="#c353b9" />
          <circle cx="78" cy="30" r="6" fill="#d04a6c" />
          <circle cx="102" cy="30" r="6" fill="#c9556a" />
          <circle cx="30" cy="54" r="6" fill="#8f7dd8" />
          <path d="M24 72h12v36H24zM48 48h12v60H48zM72 72h12v36H72zM96 48h12v60H96zM72 48h12v12H72z" fill="#fff" />
        </ModeIcon>
      </ModeGroup>
    </ModeBar>
  );
}

interface TProps {
  x: number;
  y: number;
  w: number;
  size: number;
  anchor?: "start" | "middle" | "end";
  turn?: boolean;
  children: string;
}
function T({ x, y, w, size, anchor = "start", turn, children }: TProps) {
  const left = anchor === "start" ? x : anchor === "end" ? x - w : x - w / 2;
  return (
    <text x={left} y={y} fontSize={size} textLength={w} lengthAdjust="spacingAndGlyphs" transform={turn ? `rotate(-90 ${x} ${y})` : undefined}>
      {children}
    </text>
  );
}

const schools: [string, number, number][] = [
  ["Yale University", 326, 66],
  ["Dartmouth College", 321, 84.5],
  ["Harvard University", 288, 84],
  ["University of Pennsylvania", 282, 118.5],
  ["Princeton University", 261, 90],
];

function BarChart() {
  return (
    <ChartSvg viewBox="6 813 1249 330">
      <T x={69} y={851} w={472} size={12}>Top 5 Ivy League Colleges with Highest Mid-Career 90th Percentile Salary</T>
      <rect x={153} y={888} width={1042} height={203} fill="#e5ebf5" />
      {[0, 50, 100, 150, 200, 250, 300].map((v) => (
        <g key={v}>
          <rect x={Math.round(153 + v * 3.036)} y={888} width={1} height={203} fill="#fff" />
          <T x={153 + v * 3.036} y={1101} w={v === 0 ? 5.5 : v < 100 ? 17 : 23} size={9} anchor="middle">{v ? `${v}k` : "0"}</T>
        </g>
      ))}
      {schools.map(([name, value, w], i) => (
        <g key={name}>
          <rect x={153} y={892.5 + i * 40.5} width={value * 3.036 - 0.5} height={32} fill="#656ef2" stroke="#b0b8f5" strokeWidth={0.8} />
          <T x={152} y={912 + i * 40.4} w={w} size={9} anchor="end">{name}</T>
        </g>
      ))}
      <T x={674} y={1121} w={178} size={10.5} anchor="middle">Mid-Career 90th Percentile Salary</T>
      <T x={17} y={989} w={69} size={10.5} anchor="middle" turn>School Name</T>
    </ChartSvg>
  );
}

const stages: [string, number, number][] = [
  ["Starting Median Salary", 47.9, 103],
  ["Mid-Career Median Salary", 88.3, 117],
  ["Mid-Career 10th Percentile Salary", 47.2, 152.5],
  ["Mid-Career 25th Percentile Salary", 62.1, 152.5],
  ["Mid-Career 75th Percentile Salary", 128, 152.5],
  ["Mid-Career 90th Percentile Salary", 195, 152.5],
];

function LineChart() {
  const px = (i: number) => 1367 + i * 220.3;
  const py = (v: number) => 892.3 + (200 - v) * 1.232;
  return (
    <ChartSvg viewBox="1306 813 1249 330">
      <T x={1368.5} y={851} w={213} size={12}>Finance Salaries by Career Stage</T>
      <rect x={1367} y={888} width={1102} height={203} fill="#e5ebf5" />
      {[200, 150, 100, 50].map((v) => (
        <g key={v}>
          <rect x={1367} y={Math.round(py(v))} width={1102} height={1} fill="#fff" />
          <T x={1366} y={py(v) + 2.9} w={v < 100 ? 17 : 22.5} size={9} anchor="end">{`${v}k`}</T>
        </g>
      ))}
      {stages.map(([name, , w], i) => (
        <g key={name}>
          <rect x={Math.round(px(i))} y={888} width={1} height={203} fill="#fff" />
          <T x={px(i) - 0.4} y={1101} w={w} size={9} anchor="middle">{name}</T>
        </g>
      ))}
      <polyline points={stages.map(([, v], i) => `${px(i)},${py(v)}`).join(" ")} fill="none" stroke="#636efa" strokeWidth={1.4} />
      <T x={1918} y={1121} w={31} size={10.5} anchor="middle">Stage</T>
      <T x={1325} y={989} w={42} size={10.5} anchor="middle" turn>Salaries</T>
    </ChartSvg>
  );
}

function Dropdown({ value }: { value: string }) {
  return (
    <Select>
      <SelectValue>{value}</SelectValue>
      <SelectIcons viewBox="0 0 22 12">
        <path d="M1.3 2.5l6 6M7.3 2.5l-6 6" stroke="#999" strokeWidth="1.1" />
        <path d="M15 7h6l-3 3z" fill="#999" />
      </SelectIcons>
    </Select>
  );
}

const legend: [string, Region][] = [
  ["California", "C"],
  ["Western", "W"],
  ["Midwestern", "M"],
  ["Southern", "S"],
  ["Northeastern", "N"],
];

export default function App() {
  return (
    <>
      <GlobalStyle />
      <Page>
        <Title>College Salaries Visualization</Title>
        <Heading $gap={10}>Map of College Salaries</Heading>
        <MapFigure>
          <ModeButtons />
          <MapRow>
            <MapCanvas>
              <CollegeMap />
              <Attribution aria-label="Attribution">
                <svg viewBox="0 0 18 18" width="18" height="18">
                  <circle cx="9" cy="9" r="5.3" fill="#333" />
                  <path d="M8 5h2v1.7H8zM7.5 7.7H10v3.6h.7v1.2H7.4v-1.2H8V8.9h-.5z" fill="#e8eef0" />
                </svg>
              </Attribution>
            </MapCanvas>
            <Legend>
              <LegendTitle>Region</LegendTitle>
              {legend.map(([name, key]) => (
                <LegendItem key={key}>
                  <Swatch $color={COLORS[key]} />
                  {name}
                </LegendItem>
              ))}
            </Legend>
          </MapRow>
        </MapFigure>
        <Heading $gap={7}>Details of College Salaries</Heading>
        <Columns>
          <Column>
            <Dropdown value="Ivy League" />
            <BarChart />
          </Column>
          <Column>
            <Dropdown value="Finance" />
            <LineChart />
          </Column>
        </Columns>
      </Page>
      <DebugButton aria-label="Developer tools">
        <svg viewBox="0 0 48 48" width="48" height="48">
          <path d="M17.5 16.5L10 24l7.5 7.5M30.5 16.5L38 24l-7.5 7.5" fill="none" stroke="#fff" strokeWidth="3.2" />
        </svg>
      </DebugButton>
    </>
  );
}
